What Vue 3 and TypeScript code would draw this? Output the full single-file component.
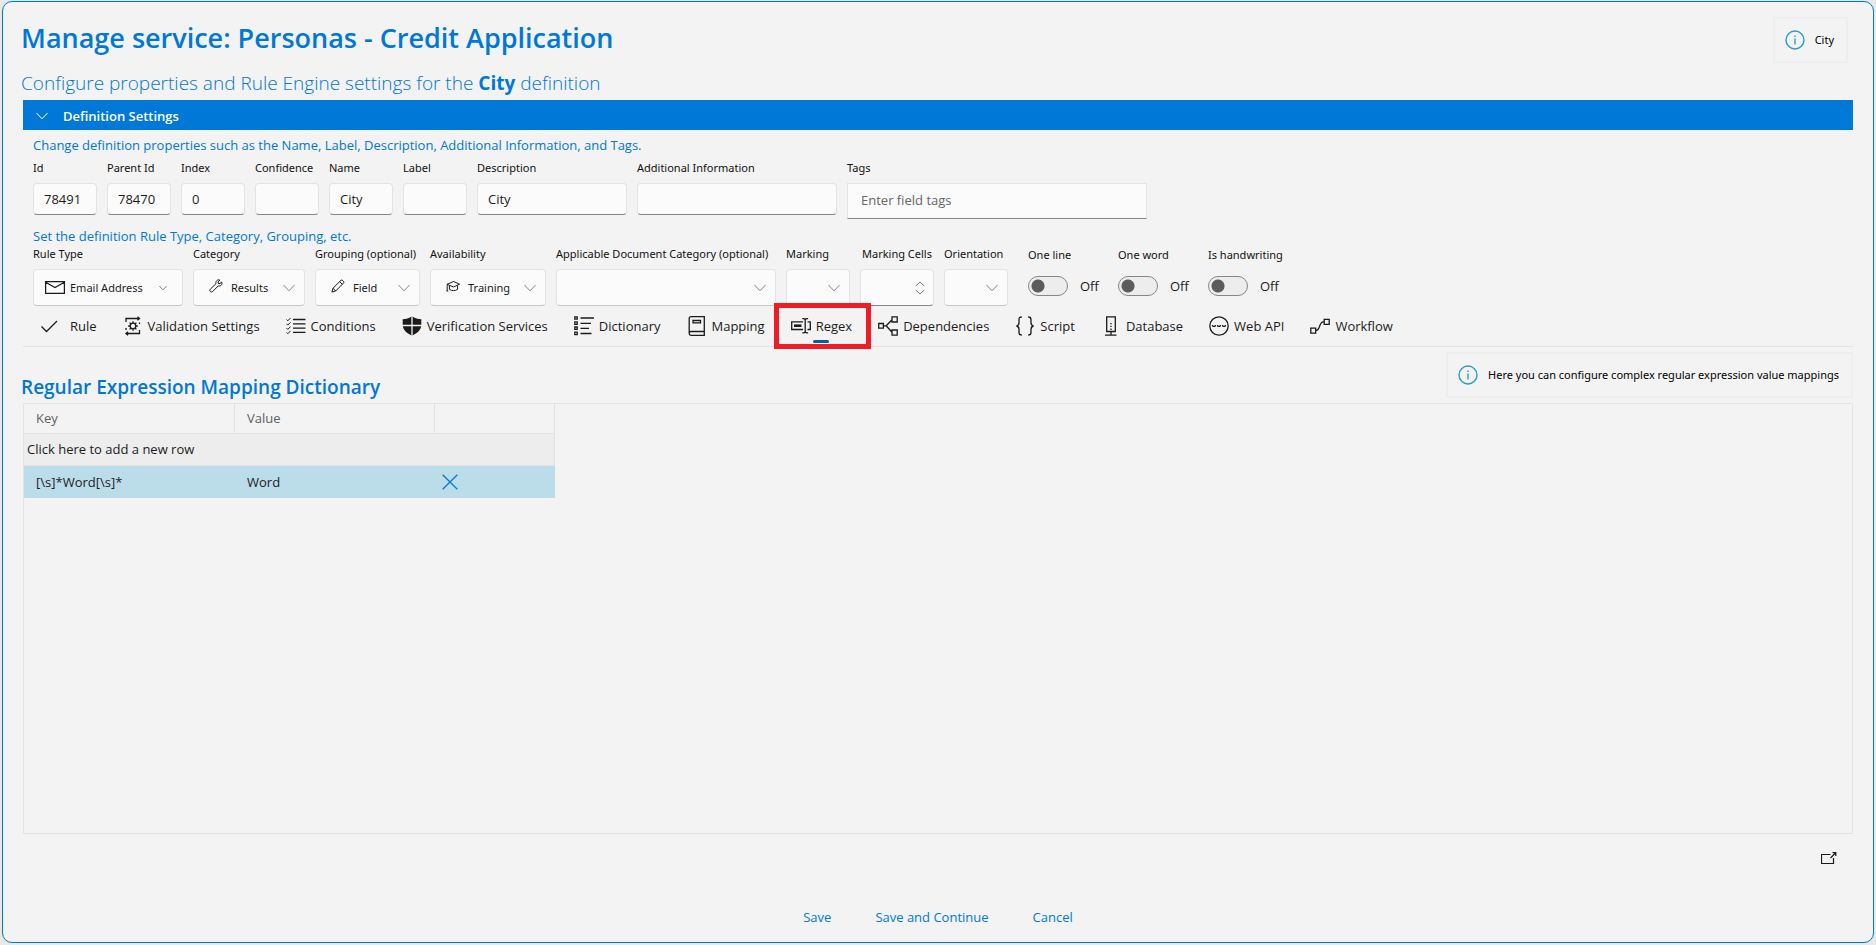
<script setup lang="ts">
import { ref } from 'vue'

interface TextField {
  id: string
  label: string
  value: string
  size: string
}

interface Tab {
  id: string
  label: string
}

const textFields = ref<TextField[]>([
  { id: 'id', label: 'Id', value: '78491', size: 'small' },
  { id: 'parent-id', label: 'Parent Id', value: '78470', size: 'small' },
  { id: 'index', label: 'Index', value: '0', size: 'small' },
  { id: 'confidence', label: 'Confidence', value: '', size: 'small' },
  { id: 'name', label: 'Name', value: 'City', size: 'small' },
  { id: 'label', label: 'Label', value: '', size: 'small' },
  { id: 'description', label: 'Description', value: 'City', size: 'medium' },
  { id: 'additional', label: 'Additional Information', value: '', size: 'large' },
])

const selects = [
  { id: 'rule-type', label: 'Rule Type', value: 'Email Address', icon: 'mail' },
  { id: 'category', label: 'Category', value: 'Results', icon: 'wrench' },
  { id: 'grouping', label: 'Grouping (optional)', value: 'Field', icon: 'pencil' },
  { id: 'availability', label: 'Availability', value: 'Training', icon: 'cap' },
  { id: 'document-category', label: 'Applicable Document Category (optional)', value: '', icon: '' },
  { id: 'marking', label: 'Marking', value: '', icon: '' },
]

const toggles = ref([
  { id: 'one-line', label: 'One line', on: false },
  { id: 'one-word', label: 'One word', on: false },
  { id: 'handwriting', label: 'Is handwriting', on: false },
])

const tabs: Tab[] = [
  { id: 'rule', label: 'Rule' },
  { id: 'validation', label: 'Validation Settings' },
  { id: 'conditions', label: 'Conditions' },
  { id: 'verification', label: 'Verification Services' },
  { id: 'dictionary', label: 'Dictionary' },
  { id: 'mapping', label: 'Mapping' },
  { id: 'regex', label: 'Regex' },
  { id: 'dependencies', label: 'Dependencies' },
  { id: 'script', label: 'Script' },
  { id: 'database', label: 'Database' },
  { id: 'webapi', label: 'Web API' },
  { id: 'workflow', label: 'Workflow' },
]

const activeTab = ref('regex')
const expanded = ref(true)
const tags = ref('')
const cells = ref('')
const rows = ref([{ key: '[\\s]*Word[\\s]*', value: 'Word' }])

function addRow() {
  rows.value.push({ key: '', value: '' })
}

function removeRow(index: number) {
  rows.value.splice(index, 1)
}
</script>

<template>
  <div class="page">
    <main class="panel">
      <header class="top">
        <div>
          <h1>Manage service: Personas - Credit Application</h1>
          <p class="subtitle">
            Configure properties and Rule Engine settings for the <strong>City</strong> definition
          </p>
        </div>
        <div class="info">
          <svg class="info-icon" viewBox="0 0 20 20"><circle cx="10" cy="10" r="9" /><path d="M10 8.500v6M10 5.500v1.400" /></svg>
          <span>City</span>
        </div>
      </header>

      <button class="bar" type="button" :aria-expanded="expanded" @click="expanded = !expanded">
        <svg viewBox="0 0 12 8"><path d="M.5 1 6 6.800 11.500 1" /></svg>
        <span>Definition Settings</span>
      </button>

      <section v-if="expanded" class="settings">
        <p class="hint">
          Change definition properties such as the Name, Label, Description, Additional Information, and Tags.
        </p>
        <div class="fields">
          <div v-for="field in textFields" :key="field.id" class="field" :class="field.size">
            <label :for="field.id">{{ field.label }}</label>
            <input :id="field.id" v-model="field.value" type="text" />
          </div>
          <div class="field tags">
            <label for="tags">Tags</label>
            <input id="tags" v-model="tags" type="text" placeholder="Enter field tags" />
          </div>
        </div>

        <p class="hint second">Set the definition Rule Type, Category, Grouping, etc.</p>
        <div class="fields options">
          <div v-for="item in selects" :key="item.id" class="field" :class="item.id">
            <label :for="item.id">{{ item.label }}</label>
            <div class="select">
              <svg v-if="item.icon === 'mail'" class="glyph mail" viewBox="0 0 20 13"><path d="M.6.6h18.800v11.800H.6zM.6 1.200 10 6.600l9.400-5.400" /></svg>
              <svg v-else-if="item.icon === 'wrench'" class="glyph" viewBox="0 0 14 14"><path d="M12.700 3 10.900 4.600 9.200 4.400 9.100 2.800 10.900 1.100C8.700.2 6.300 2 7 4.600L1.200 10.300c-1.300 1.400.9 3.700 2.400 2.300L9.300 6.900C11.800 7.600 13.700 5.300 12.700 3z" /></svg>
              <svg v-else-if="item.icon === 'pencil'" class="glyph" viewBox="0 0 14 14"><path d="M.9 13.100 2 9.200 10 1.300c1-1 3.600 1.400 2.600 2.600L4.700 12zM8.600 2.600l2.700 2.700M2 9.200 4.700 12" /></svg>
              <svg v-else-if="item.icon === 'cap'" class="glyph" viewBox="0 0 14 14"><path d="M1 5.300 7.500 2.500l6 2.700-6 2.800L3.200 6.200zM3.400 6.400v3.900c2.500 1.800 5.900 1.800 8.200 0V6.400M1.200 5.300v6.500M.4 12h1.800" /></svg>
              <select :id="item.id" :class="item.icon"><option>{{ item.value }}</option></select>
              <svg class="chevron" viewBox="0 0 12 8"><path d="M.5 1 6 6.800 11.500 1" /></svg>
            </div>
          </div>
          <div class="field cells">
            <label for="cells">Marking Cells</label>
            <div class="select">
              <input id="cells" v-model="cells" type="text" inputmode="numeric" />
              <svg class="spin" viewBox="0 0 10 14"><path d="M.8 5 5 1l4.200 4M.8 9 5 13l4.200-4" /></svg>
            </div>
          </div>
          <div class="field marking">
            <label for="orientation">Orientation</label>
            <div class="select">
              <select id="orientation"><option></option></select>
              <svg class="chevron" viewBox="0 0 12 8"><path d="M.5 1 6 6.800 11.500 1" /></svg>
            </div>
          </div>
          <div class="toggles">
            <div v-for="toggle in toggles" :key="toggle.id" class="field toggle">
              <label :for="toggle.id">{{ toggle.label }}</label>
              <div class="switch">
                <input :id="toggle.id" v-model="toggle.on" type="checkbox" role="switch" />
                <span>{{ toggle.on ? 'On' : 'Off' }}</span>
              </div>
            </div>
          </div>
        </div>
      </section>

      <nav class="tabs" role="tablist">
        <button
          v-for="tab in tabs"
          :key="tab.id"
          type="button"
          role="tab"
          class="tab"
          :class="[tab.id, { active: tab.id === activeTab }]"
          :aria-selected="tab.id === activeTab"
          @click="activeTab = tab.id"
        >
          <svg viewBox="0 0 20 20">
            <path v-if="tab.id === 'rule'" d="M1.500 10.500 6.500 15.500 17 5" />
            <template v-else-if="tab.id === 'validation'">
              <path d="M3 6V2.500h13.500M14.500.8l2 1.700-2 1.700M16.500 6.500V8M3 12v2M16.500 14v3.500H3M5 15.800l-2 1.700 2 1.700" />
              <circle cx="10" cy="10" r="2.800" />
              <path d="M10 5.200v2M10 12.800v2M5.200 10h2M12.800 10h2M6.600 6.600 8 8M12 12l1.400 1.400M6.600 13.400 8 12M12 8l1.400-1.400" />
            </template>
            <template v-else-if="tab.id === 'conditions'">
              <path d="M7 3.500h12.500M7 7.800h12.500M7 12.100h12.500M7 16.400h12.500" />
              <path class="thin" d="m.5 3.500 1.300 1.300L4.500 2M.5 7.800l1.300 1.300 2.700-2.800M.5 12.100l1.300 1.300 2.700-2.800M.5 16.400l1.300 1.300 2.700-2.800" />
            </template>
            <template v-else-if="tab.id === 'verification'">
              <path class="solid" d="M10 .3C7.200 2.300 4 3.200.7 3.200V9c0 5 4.600 8.500 9.300 10.700 4.700-2.200 9.300-5.700 9.300-10.700V3.200C16 3.200 12.800 2.300 10 .3z" />
              <path class="cut" d="M10 0v20M0 9.500h20" />
            </template>
            <template v-else-if="tab.id === 'dictionary'">
              <path d="M6.500 2H20M6.500 7.300h10.500M6.500 12.400H15M6.500 17.500h11" />
              <path d="M.8.800h2.400v2.400H.8zM.8 5.900h2.400v2.400H.8zM.8 11h2.400v2.400H.8zM.8 16.200h2.400v2.400H.8z" />
            </template>
            <path v-else-if="tab.id === 'mapping'" d="M17.300 15.500V.7H4C2.800.7 2.200 1.400 2.200 2.500v15c0 1.200.8 1.800 1.800 1.800h13.300v-3.800H4c-1 0-1.800.7-1.800 1.600M6 4.500h7.500v2.300H6z" />
            <template v-else-if="tab.id === 'regex'">
              <path d="M12 5.800H.7v7.700H12M16.500 5.800h2.800v7.700h-2.800M14.200 3v13.500M11.300 2.700c1.500-.3 2.400 0 2.900.9.500-.9 1.400-1.200 2.900-.9M11.300 16.800c1.500.3 2.400 0 2.900-.9.500.9 1.400 1.200 2.900.9" />
              <path class="bold" d="M3 9.700h7.500" />
            </template>
            <path v-else-if="tab.id === 'dependencies'" d="M.7 7.500h4.700v4.700H.7zM14 .8h5.200V6H14zM14 14h5.200v5.200H14zM5.400 9.800h2.800l5.800-6M8.200 9.800l5.800 6.500" />
            <path v-else-if="tab.id === 'script'" d="M6.800 1C4.500 1 4 1.800 4 3.600v3.200C4 8.700 3.200 9.600 1.500 10c1.700.4 2.500 1.300 2.500 3.200v3.200C4 18.200 4.500 19 6.800 19M13.200 1c2.300 0 2.800.8 2.800 2.600v3.200c0 1.900.8 2.800 2.500 3.200-1.700.4-2.500 1.300-2.500 3.200v3.200c0 1.800-.5 2.600-2.800 2.600" />
            <template v-else-if="tab.id === 'database'">
              <path d="M5.700.8h8.600v14.700H5.700zM10 15.500v3.500M4 19.200h11.500" />
              <path class="dots" d="M10 7v7" />
            </template>
            <template v-else-if="tab.id === 'webapi'">
              <circle cx="10" cy="10" r="9.200" />
              <path class="thin" d="m3.200 9 1 2 .8-1.500.8 1.500 1-2M8.200 9l1 2 .8-1.500.8 1.500 1-2M13.200 9l1 2 .8-1.500.8 1.500 1-2" />
            </template>
            <path v-else d="M.8 12.200h4.900v4.900H.8zM14.200 3.300h5v5h-5zM5.700 14.700c5 0 2.500-9 8.500-9" />
          </svg>
          <span>{{ tab.label }}</span>
        </button>
      </nav>

      <div class="section-head">
        <h2>Regular Expression Mapping Dictionary</h2>
        <div class="info">
          <svg class="info-icon" viewBox="0 0 20 20"><circle cx="10" cy="10" r="9" /><path d="M10 8.500v6M10 5.500v1.400" /></svg>
          <span>Here you can configure complex regular expression value mappings</span>
        </div>
      </div>

      <div class="grid">
        <table>
          <colgroup>
            <col class="key-col" />
            <col class="value-col" />
            <col class="action-col" />
          </colgroup>
          <thead>
            <tr><th scope="col">Key</th><th scope="col">Value</th><th></th></tr>
          </thead>
          <tbody>
            <tr class="add">
              <td colspan="3"><button type="button" @click="addRow">Click here to add a new row</button></td>
            </tr>
            <tr v-for="(row, index) in rows" :key="index" class="selected">
              <td>{{ row.key }}</td>
              <td>{{ row.value }}</td>
              <td class="action">
                <button type="button" aria-label="Delete row" @click="removeRow(index)">
                  <svg viewBox="0 0 16 16"><path d="m.7.700 14.600 14.600M15.300.700.700 15.300" /></svg>
                </button>
              </td>
            </tr>
          </tbody>
        </table>
      </div>

      <div class="popout">
        <button type="button" aria-label="Open in new window">
          <svg viewBox="0 0 16 12"><path d="M9.500 2.500h-9v9h12V6M9.500 6 14.500 1M11.500.700h3.300V4" /></svg>
        </button>
      </div>

      <footer>
        <button type="button">Save</button>
        <button type="button">Save and Continue</button>
        <button type="button">Cancel</button>
      </footer>
    </main>
  </div>
</template>

<style>
body {
  background: #e7e8ea;
}
</style>

<style scoped>
.page {
  box-sizing: border-box;
  display: flex;
  min-height: 100vh;
  padding: 1px 2px 2px;
  color: #1b1b1b;
  font: 13px/18px "Open Sans", "Noto Sans", sans-serif;
}

.page * {
  box-sizing: border-box;
}

.panel {
  display: flex;
  flex: 1;
  flex-direction: column;
  min-width: 0;
  background: #f3f3f3;
  border: 1px solid #0078d7;
  border-radius: 10px;
}

h1,
h2,
p {
  margin: 0;
}

button {
  padding: 0;
  color: inherit;
  font: inherit;
  background: none;
  border: 0;
}

svg {
  flex: none;
  fill: none;
  stroke: currentColor;
}

.top {
  display: flex;
  align-items: flex-start;
  justify-content: space-between;
  height: 98px;
  padding: 15px 25px 0 18px;
}

h1 {
  color: #0078d7;
  font-size: 27px;
  font-weight: 600;
  line-height: 42px;
}

.subtitle {
  margin-top: 11px;
  color: #0078d7;
  font-size: 19px;
  font-weight: 300;
  line-height: 26px;
}

.subtitle strong {
  font-weight: 700;
}

.info {
  display: flex;
  gap: 10px;
  align-items: center;
  height: 46px;
  padding: 0 12px 0 10px;
  color: #000;
  font-family: "Noto Sans", "Open Sans", sans-serif;
  font-size: 11px;
  border: 2px solid #eeeeee;
}

.info-icon {
  width: 20px;
  height: 20px;
  color: #2b9cc9;
  stroke-width: 1.4;
}

.bar {
  display: flex;
  gap: 15px;
  align-items: center;
  height: 30px;
  margin: 0 20px;
  padding: 2px 13px 0;
  color: #fff;
  font-weight: 600;
  background: #0078d7;
}

.bar svg {
  width: 12px;
  height: 8px;
}

.settings {
  padding: 6px 30px 0;
}

.hint {
  color: #0078d7;
}

.fields {
  display: flex;
  gap: 10px;
  align-items: flex-start;
  margin-top: 6px;
}

.field {
  display: flex;
  flex: none;
  flex-direction: column;
  gap: 7px;
}

.field label {
  color: #111;
  font-family: "Noto Sans", "Open Sans", sans-serif;
  font-size: 11px;
  line-height: 16px;
  white-space: nowrap;
}

.field input[type='text'],
select {
  width: 100%;
  height: 32px;
  padding: 0 10px;
  color: #1b1b1b;
  font: inherit;
  background: #fbfbfb;
  border: 1px solid #e3e3e3;
  border-bottom-color: #868686;
  border-radius: 4px;
  outline: 0;
}

.small {
  width: 64px;
}

.medium {
  width: 150px;
}

.large {
  width: 200px;
}

.tags {
  width: 300px;
}

.field.tags input {
  height: 36px;
  padding: 0 13px 2px;
  border-radius: 0;
}

.tags input::placeholder {
  color: #666;
}

.hint.second {
  margin-top: 8px;
}

.options {
  margin-top: 1px;
}

.rule-type {
  width: 150px;
}

.category {
  width: 112px;
}

.grouping {
  width: 105px;
}

.availability {
  width: 116px;
}

.document-category {
  width: 220px;
}

.marking {
  width: 64px;
}

.cells {
  width: 74px;
}

.cells label {
  padding-left: 2px;
}

.select {
  position: relative;
}

.field .select select,
.field .select input {
  height: 37px;
}

.field .select select {
  padding: 0 0 0 37px;
  font-family: "Noto Sans", "Open Sans", sans-serif;
  font-size: 11px;
  border-bottom-color: #c8c8c8;
  appearance: none;
}

.field .select select.mail {
  padding-left: 36px;
}

.glyph {
  position: absolute;
  top: 10px;
  left: 16px;
  width: 14px;
  height: 14px;
  pointer-events: none;
}

.glyph.mail {
  top: 12px;
  left: 12px;
  width: 20px;
  height: 13px;
  stroke-width: 1.2;
}

.chevron {
  position: absolute;
  top: 15px;
  right: 10px;
  width: 12px;
  height: 8px;
  color: #868686;
  pointer-events: none;
}

.rule-type .chevron {
  right: 16px;
  width: 8px;
  color: #444;
}

.spin {
  position: absolute;
  top: 12px;
  right: 9px;
  width: 10px;
  height: 14px;
  color: #777;
  pointer-events: none;
}

.toggles {
  display: flex;
  margin-left: 10px;
}

.toggle {
  gap: 12px;
  width: 90px;
  padding-top: 1px;
}

.switch {
  display: flex;
  gap: 12px;
  align-items: center;
  padding-top: 1px;
}

.switch input {
  width: 40px;
  height: 20px;
  margin: 0;
  background: radial-gradient(circle at 9px 9px, #5c5c5c 6px, transparent 7px) #ededed;
  border: 1px solid #868686;
  border-radius: 10px;
  appearance: none;
}

.switch input:checked {
  background: radial-gradient(circle at 29px 9px, #fff 6px, transparent 7px) #0078d7;
}

.tabs {
  display: flex;
  gap: 26px;
  height: 41px;
  margin: 0 20px;
  padding-left: 17px;
  border-bottom: 1px solid #e3e3e3;
}

.tab {
  position: relative;
  display: flex;
  flex: none;
  gap: 5px;
  align-items: center;
}

.tab svg {
  width: 20px;
  height: 20px;
  stroke-width: 1.3;
}

.tab.rule svg {
  margin-right: 5px;
}

.tab svg .thin {
  stroke-width: 1;
}

.tab svg .bold {
  stroke-width: 2.6;
}

.tab svg .dots {
  stroke-dasharray: 1.3 1.5;
}

.tab svg .solid {
  fill: #1b1b1b;
  stroke: none;
}

.tab svg .cut {
  stroke: #f3f3f3;
}

.tab.active::before {
  position: absolute;
  inset: -3px -19px -3px -17px;
  border: 5px solid #ee1c25;
  content: '';
}

.tab.active::after {
  position: absolute;
  bottom: 3px;
  left: calc(50% - 8px);
  width: 16px;
  height: 3px;
  background: #005fa8;
  border-radius: 2px;
  content: '';
}

.section-head {
  display: flex;
  align-items: flex-start;
  justify-content: space-between;
  height: 56px;
  padding: 5px 20px 0 18px;
}

h2 {
  margin-top: 22px;
  color: #0078d7;
  font-size: 19px;
  font-weight: 600;
  line-height: 26px;
}

.grid {
  flex: 1;
  margin: 0 20px;
  border: 1px solid #e3e3e3;
}

table {
  width: 531px;
  table-layout: fixed;
  border-spacing: 0;
}

.key-col {
  width: 211px;
}

.value-col {
  width: 200px;
}

.action-col {
  width: 120px;
}

th,
td {
  height: 32px;
  padding: 0 12px;
  text-align: left;
}

th {
  height: 30px;
  padding-bottom: 2px;
  color: #606060;
  font-weight: 400;
  border-right: 1px solid #e3e3e3;
  border-bottom: 1px solid #e3e3e3;
}

.add td {
  padding: 0 3px 2px;
  background: #ededed;
  border-right: 1px solid #e3e3e3;
  border-bottom: 1px solid #e3e3e3;
}

.selected td {
  background: #bbdde9;
}

.selected td.action {
  padding: 0 7px;
}

.action button {
  display: block;
  color: #0078d7;
}

.action svg {
  display: block;
  width: 16px;
  height: 16px;
  stroke-width: 1.3;
}

.popout {
  display: flex;
  justify-content: flex-end;
  padding: 17px 36px 0 0;
}

.popout svg {
  display: block;
  width: 16px;
  height: 14px;
  stroke-width: 1.2;
}

footer {
  display: flex;
  gap: 44px;
  justify-content: center;
  padding: 43px 0 16px;
  color: #0078d7;
}
</style>
